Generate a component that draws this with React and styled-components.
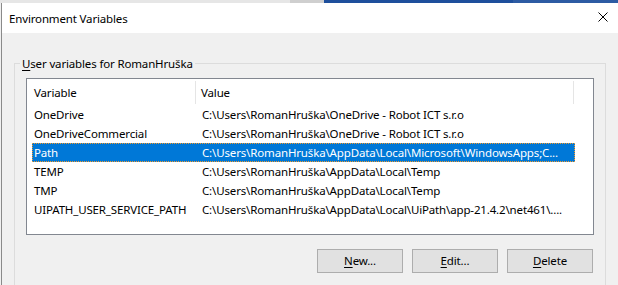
import React from 'react'
import styled, { createGlobalStyle } from 'styled-components'

const GlobalStyle = createGlobalStyle`
  html, body { margin: 0; padding: 0; background: #f0f0f0; }
  body {
    font-family: 'Noto Sans', 'Open Sans', sans-serif;
    font-size: 11.5px;
    letter-spacing: -0.15px;
    color: #000;
  }
`

const Screen = styled.div`
  width: 618px;
  height: 285px;
  overflow: hidden;
  display: flex;
  flex-direction: column;
  background: #f0f0f0;
`

// strip of the settings window lying behind the dialog
const BackStrip = styled.div`
  height: 3px;
  display: flex;
  flex-shrink: 0;
`
const BackPart = styled.div`
  width: ${p => p.w}px;
  flex: ${p => (p.w ? 'none' : '1')};
  background: ${p => p.bg};
`

const Dialog = styled.div`
  flex: 1;
  display: flex;
  flex-direction: column;
  margin-left: 1px;
  border-left: 1px solid #8a8a8a;
  background: #f0f0f0;
`

const TitleBar = styled.div`
  height: 30px;
  flex-shrink: 0;
  background: #fff;
  display: flex;
  align-items: center;
  justify-content: space-between;
  padding: 0 10px 0 7px;
`
const Title = styled.span`
  line-height: 16px;
  margin-top: 1px;
`
const CloseBox = styled.div`
  width: 10px;
  height: 10px;
  display: flex;
  margin-top: -2px;
`

const Body = styled.div`
  padding: 22px 12px 0 12px;
`

const Group = styled.fieldset`
  margin: 0;
  padding: 7px 0 0 0;
  border: 1px solid #dcdcdc;
  border-bottom: none;
  height: 230px;
  box-sizing: border-box;
`
const Legend = styled.legend`
  margin-left: 5px;
  padding: 0 2px;
  line-height: 16px;
  transform: translateY(1px);
`
const Key = styled.u`
  text-decoration-thickness: 1px;
  text-underline-offset: 2px;
`
const GroupInner = styled.div`
  margin: 0 11px;
`

const ListView = styled.div`
  height: 157px;
  box-sizing: border-box;
  border: 1px solid #828790;
  background: #fff;
`
const Header = styled.div`
  height: 26px;
  display: grid;
  grid-template-columns: 169px 378px 1fr;
`
const HeadCell = styled.div`
  height: 23px;
  display: flex;
  align-items: center;
  padding-left: ${p => p.pad}px;
  border-right: ${p => (p.sep ? '1px solid #e5e5e5' : 'none')};
  margin-top: 2px;
  line-height: 16px;
`

const Rows = styled.div`
  padding-left: 5px;
  width: 543px;
`
const Row = styled.div`
  height: 19px;
  box-sizing: border-box;
  display: grid;
  grid-template-columns: 168px 1fr;
  align-items: center;
  line-height: 16px;
  background: ${p => (p.selected ? '#0078d7' : 'transparent')};
  color: ${p => (p.selected ? '#fff' : '#000')};
  border: 1px ${p => (p.selected ? 'dotted #f39a2b' : 'solid transparent')};
`
const Cell = styled.div`
  padding-left: 1px;
  white-space: nowrap;
  overflow: hidden;
`

const ButtonBar = styled.div`
  display: flex;
  justify-content: flex-end;
  gap: 9px;
  margin-top: 14px;
  padding-right: 1px;
`
const Button = styled.button`
  width: 86px;
  height: 24px;
  box-sizing: border-box;
  background: #e1e1e1;
  border: 1px solid #adadad;
  font-family: inherit;
  font-size: inherit;
  letter-spacing: inherit;
  color: #000;
  padding: 0;
  line-height: 16px;
`

const vars = [
  ['OneDrive', 'C:\\Users\\RomanHruška\\OneDrive - Robot ICT s.r.o'],
  ['OneDriveCommercial', 'C:\\Users\\RomanHruška\\OneDrive - Robot ICT s.r.o'],
  ['Path', 'C:\\Users\\RomanHruška\\AppData\\Local\\Microsoft\\WindowsApps;C...'],
  ['TEMP', 'C:\\Users\\RomanHruška\\AppData\\Local\\Temp'],
  ['TMP', 'C:\\Users\\RomanHruška\\AppData\\Local\\Temp'],
  ['UIPATH_USER_SERVICE_PATH', 'C:\\Users\\RomanHruška\\AppData\\Local\\UiPath\\app-21.4.2\\net461\\....'],
]

export default function App() {
  return (
    <>
      <GlobalStyle />
      <Screen>
        <BackStrip>
          <BackPart w={290} bg="#e6e6e6" />
          <BackPart w={34} bg="#cfcfcf" />
          <BackPart w={189} bg="#1e4f9c" />
          <BackPart bg="#2d5ba3" />
        </BackStrip>
        <Dialog>
          <TitleBar>
            <Title>Environment Variables</Title>
            <CloseBox>
              <svg width="10" height="10" viewBox="0 0 10 10">
                <path d="M0.5 0.5 L9.5 9.5 M9.5 0.5 L0.5 9.5" stroke="#000" strokeWidth="1" />
              </svg>
            </CloseBox>
          </TitleBar>
          <Body>
            <Group>
              <Legend><Key>U</Key>ser variables for RomanHruška</Legend>
              <GroupInner>
                <ListView>
                  <Header>
                    <HeadCell pad={7} sep>Variable</HeadCell>
                    <HeadCell pad={5} sep>Value</HeadCell>
                    <span />
                  </Header>
                  <Rows>
                    {vars.map(([name, value]) => (
                      <Row key={name} selected={name === 'Path'}>
                        <Cell>{name}</Cell>
                        <Cell>{value}</Cell>
                      </Row>
                    ))}
                  </Rows>
                </ListView>
                <ButtonBar>
                  <Button><Key>N</Key>ew...</Button>
                  <Button><Key>E</Key>dit...</Button>
                  <Button><Key>D</Key>elete</Button>
                </ButtonBar>
              </GroupInner>
            </Group>
          </Body>
        </Dialog>
      </Screen>
    </>
  )
}
